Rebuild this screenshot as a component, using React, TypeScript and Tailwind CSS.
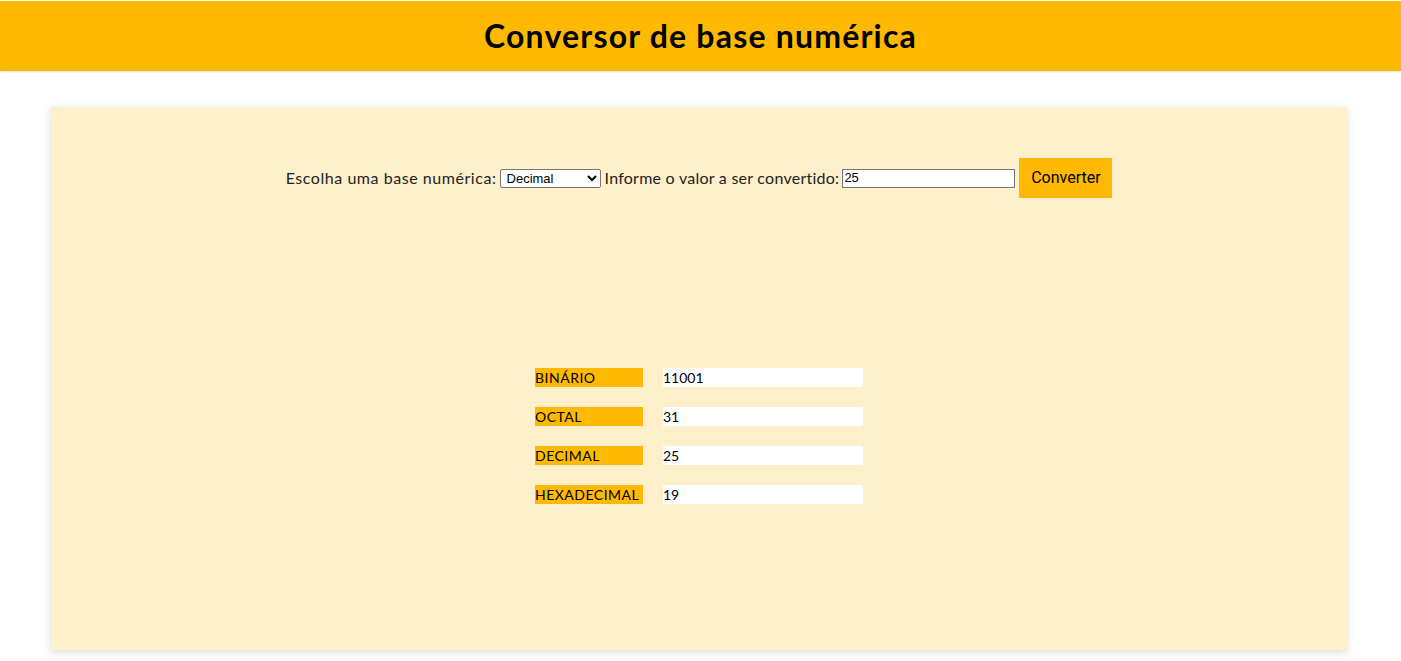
import { useState } from 'react'

const rows = [
  { label: 'BINÁRIO', value: '11001' },
  { label: 'OCTAL', value: '31' },
  { label: 'DECIMAL', value: '25' },
  { label: 'HEXADECIMAL', value: '19' },
]

export default function App() {
  const [base, setBase] = useState('decimal')
  const [valor, setValor] = useState('25')

  return (
    <div className="min-h-screen bg-white font-['Lato',sans-serif] text-[#222]">
      <header className="mt-px flex h-[70px] items-center justify-center bg-[#ffb900] shadow-[0_1px_2px_rgba(0,0,0,0.12)]">
        <h1 className="text-[32px] font-bold tracking-[1.2px] text-black">Conversor de base numérica</h1>
      </header>

      <main className="ml-[51px] mt-[36px] w-[1296px] bg-[#fff0cc] pb-[146px] pt-[51px] shadow-[0_2px_8px_rgba(0,0,0,0.15)]">
        <form
          className="flex items-center justify-center text-[16px]"
          onSubmit={(event) => event.preventDefault()}
        >
          <label htmlFor="base" className="tracking-[0.55px]">Escolha uma base numérica:</label>
          <select
            id="base"
            className="ml-[3px] h-[19px] w-[101px] rounded-[2px] border border-[#767676] bg-white px-[2px] font-['Liberation_Sans',sans-serif] text-[13px] text-black"
            value={base}
            onChange={(event) => setBase(event.target.value)}
          >
            <option value="binario">Binário</option>
            <option value="octal">Octal</option>
            <option value="decimal">Decimal</option>
            <option value="hexadecimal">Hexadecimal</option>
          </select>
          <label htmlFor="valor" className="ml-[4px] tracking-[0.25px]">Informe o valor a ser convertido:</label>
          <input
            id="valor"
            className="ml-[3px] h-[19px] w-[173px] border border-[#767676] bg-white px-[1px] font-['Liberation_Sans',sans-serif] text-[13px] text-black"
            value={valor}
            onChange={(event) => setValor(event.target.value)}
          />
          <button
            type="submit"
            className="ml-[4px] h-[40px] w-[93px] bg-[#ffb900] font-['Roboto',sans-serif] text-[16px] text-black"
          >
            Converter
          </button>
        </form>

        <div className="mt-[170px] flex flex-col items-center gap-[20px]">
          {rows.map((row) => (
            <div key={row.label} className="flex w-[328px] gap-[20px] text-[14px] leading-[19px]">
              <span className="h-[19px] w-[108px] bg-[#ffb900] tracking-[0.5px] text-black">{row.label}</span>
              <span className="h-[19px] w-[200px] bg-white text-black">{row.value}</span>
            </div>
          ))}
        </div>
      </main>
    </div>
  )
}
